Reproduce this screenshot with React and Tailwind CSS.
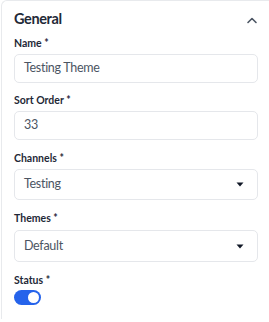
import { useState } from 'react';

const font = { fontFamily: 'Lato, "Noto Sans", sans-serif' };

function Label({ children, className = '' }) {
  return (
    <label className={`block h-[14px] text-[10.5px] leading-[12px] font-bold text-[#1f2937] ${className}`}>
      {children} *
    </label>
  );
}

function TextInput({ value, className = '' }) {
  return (
    <div className={`w-[244px] h-[29px] flex items-center px-[9px] border border-[#e5e7eb] rounded-[5px] text-[12.5px] tracking-[-0.3px] text-[#4b5563] ${className}`}>
      {value}
    </div>
  );
}

function Select({ value, className = '' }) {
  return (
    <div className={`w-[244px] h-[31px] flex items-center justify-between pl-[9px] pr-[13px] border border-[#e5e7eb] rounded-[5px] text-[12.5px] tracking-[-0.3px] text-[#4b5563] ${className}`}>
      <span>{value}</span>
      <svg width="8" height="5" viewBox="0 0 8 5">
        <path d="M0.5 0.5 L7.5 0.5 L4 4.5 Z" fill="#111827" />
      </svg>
    </div>
  );
}

export default function App() {
  const [ativo, setAtivo] = useState(true);

  return (
    <div className="w-[269px] h-[322px] bg-white overflow-hidden pl-px" style={font}>
      <div className="w-[290px] h-[319px] border-t border-l border-[#e8eaed] rounded-tl-[6px] pl-[12px]">
        {/* cabeçalho */}
        <div className="flex items-center justify-between w-[245px] h-[36px] pb-px">
          <h2 className="text-[14.5px] tracking-[-0.4px] font-bold text-[#1f2937]">General</h2>
          <svg width="12" height="8" viewBox="0 0 12 8" className="mr-[1px] mt-[2px]">
            <path d="M2 6.5 L6 2.5 L10 6.5" fill="none" stroke="#4b5563" strokeWidth="1.6" strokeLinecap="round" strokeLinejoin="round" />
          </svg>
        </div>

        <Label className="mb-[3px]">Name</Label>
        <TextInput value="Testing Theme" />

        <Label className="mt-[11px] mb-[3px]">Sort Order</Label>
        <TextInput value="33" />

        <Label className="mt-[12px] mb-[3px]">Channels</Label>
        <Select value="Testing" />

        <Label className="mt-[12px] mb-[4px]">Themes</Label>
        <Select value="Default" className="h-[32px]" />

        <Label className="mt-[12px] mb-[2px]">Status</Label>
        <button
          onClick={() => setAtivo(!ativo)}
          className={`relative block w-[27px] h-[15px] rounded-full ${ativo ? 'bg-[#2563eb]' : 'bg-gray-300'}`}
        >
          <span className={`absolute top-[2px] w-[11px] h-[11px] rounded-full bg-white ${ativo ? 'right-[2px]' : 'left-[2px]'}`} />
        </button>
      </div>
    </div>
  );
}
